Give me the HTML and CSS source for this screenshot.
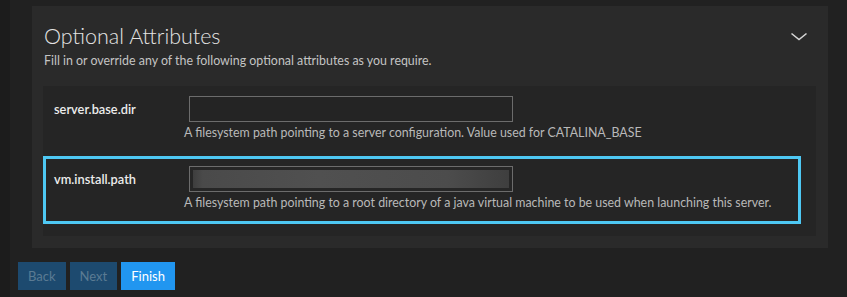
FILE: index.html
```html
<!DOCTYPE html>
<html>
    <head>
        <meta charset="utf-8">
        <title>Optional Attributes</title>
        <link rel="stylesheet" href="styles.css">
    </head>
    <body>
    <div class="shell">
        <div class="panel">
            <div class="panel-head">
                <div>
                    <div class="title">Optional Attributes</div>
                    <div class="subtitle">Fill in or override any of the following optional attributes as you require.</div>
                </div>
                <svg class="chevron" width="18" height="10" viewBox="0 0 18 10">
                    <polyline points="1.5,1.5 9,7.5 16.5,1.5" fill="none" stroke="#d6d6d6" stroke-width="1.6"/>
                </svg>
            </div>
            <div class="fields">
                <div class="row">
                    <div class="label">server.base.dir</div>
                    <div class="control">
                        <input type="text" class="text">
                        <div class="hint">A filesystem path pointing to a server configuration. Value used for CATALINA_BASE</div>
                    </div>
                </div>
                <div class="row selected">
                    <div class="label">vm.install.path</div>
                    <div class="control">
                        <div class="text blurred"></div>
                        <div class="hint">A filesystem path pointing to a root directory of a java virtual machine to be used when launching this server.</div>
                    </div>
                </div>
            </div>
        </div>
        <div class="buttons">
            <button class="btn" disabled>Back</button>
            <button class="btn" disabled>Next</button>
            <button class="btn primary">Finish</button>
        </div>
    </div>
    </body>
</html>
```

FILE: styles.css
```css
body{
    margin: 0;
    background: #1c1c1c;
    font-family: "Lato", "Noto Sans", sans-serif;
    color: #cfcfcf;
}
.shell{
    margin-left: 10px;
    padding-top: 6px;
    height: 291px;
    background: #212121;
}
.panel{
    margin-left: 22px;
    margin-right: 19px;
    padding: 17px 12px 12px 11px;
    background: #2a2a2a;
}
.panel-head{
    display: flex;
    justify-content: space-between;
    align-items: flex-start;
}
.title{
    margin-left: 1px;
    font-size: 21.5px;
    font-weight: 300;
    line-height: 26px;
    color: #e4e4e4;
}
.subtitle{
    margin-left: 1px;
    margin-top: 4px;
    font-size: 12.4px;
    line-height: 16px;
    color: #c4c4c4;
}
.chevron{
    margin-top: 9px;
    margin-right: 8px;
}
.fields{
    margin-top: 17px;
    padding: 0 0 12px 0;
    background: #252525;
    display: flex;
    flex-direction: column;
    gap: 2px;
}
.row{
    width: 744px;
    display: flex;
    border: 3px solid transparent;
    padding: 7px 0 11px 8px;
}
.row.selected{
    border-color: #4ec8f3;
}
.label{
    width: 130px;
    height: 26px;
    line-height: 26px;
    font-size: 12.8px;
    font-weight: 600;
    color: #ececec;
}
.text{
    display: block;
    box-sizing: border-box;
    margin: 0 0 4px 5px;
    width: 324px;
    height: 26px;
    border: 1px solid #6c6c6c;
    background: #242424;
}
.blurred{
    background: linear-gradient(90deg, #3a3a3a 0%, #4a4a4a 4%, #505050 40%, #4c4c4c 80%, #3e3e3e 100%);
    box-shadow: inset 0 0 0 3px #262626;
}
.hint{
    font-size: 12.4px;
    line-height: 14px;
    color: #b9b9b9;
}
.buttons{
    display: flex;
    gap: 4px;
    margin-left: 8px;
    margin-top: 14px;
}
.btn{
    height: 28px;
    padding: 0 10px;
    border: 0;
    font-family: "Lato", "Noto Sans", sans-serif;
    font-size: 13px;
    background: #1d4a6f;
    color: #5b7b93;
}
.btn.primary{
    background: #2196f0;
    color: #ffffff;
}
```
